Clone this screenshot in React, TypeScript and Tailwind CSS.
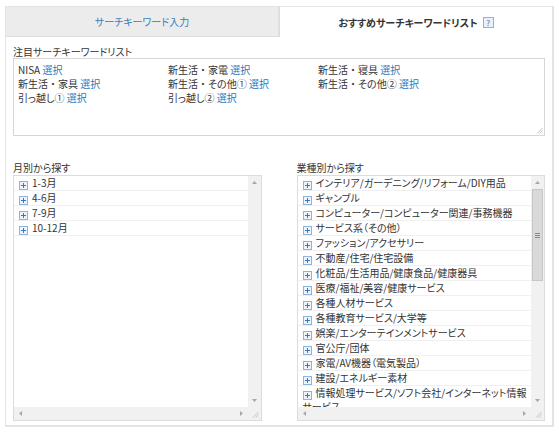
import React from "react";

const keywords = [
  "NISA",
  "新生活・家電",
  "新生活・寝具",
  "新生活・家具",
  "新生活・その他①",
  "新生活・その他②",
  "引っ越し①",
  "引っ越し②",
];

const months = ["1-3月", "4-6月", "7-9月", "10-12月"];

const industries = [
  "インテリア/ガーデニング/リフォーム/DIY用品",
  "ギャンブル",
  "コンピューター/コンピューター関連/事務機器",
  "サービス系（その他）",
  "ファッション/アクセサリー",
  "不動産/住宅/住宅設備",
  "化粧品/生活用品/健康食品/健康器具",
  "医療/福祉/美容/健康サービス",
  "各種人材サービス",
  "各種教育サービス/大学等",
  "娯楽/エンターテインメントサービス",
  "官公庁/団体",
  "家電/AV機器（電気製品）",
  "建設/エネルギー素材",
  "情報処理サービス/ソフト会社/インターネット情報サービス",
];

// keep the middle dot full width (palt would squeeze it)
function Label({ text }: { text: string }) {
  const parts = text.split("・");
  return (
    <>
      {parts.map((p, i) => (
        <React.Fragment key={i}>
          {i > 0 && <span className="[font-feature-settings:normal]">・</span>}
          {p}
        </React.Fragment>
      ))}
    </>
  );
}

function PlusBox() {
  return (
    <span className="inline-flex items-center justify-center w-[9px] h-[9px] border border-[#8fb3d9] bg-[#eef4fb] mr-[4px] align-[-1px]">
      <svg width="5" height="5" viewBox="0 0 5 5">
        <path d="M0 2.5H5M2.5 0V5" stroke="#3a78b8" strokeWidth="1" />
      </svg>
    </span>
  );
}

function Arrow({ dir }: { dir: "up" | "down" | "left" | "right" }) {
  const d = {
    up: "M1 4L3.5 1L6 4Z",
    down: "M1 1L3.5 4L6 1Z",
    left: "M4 1L1 3.5L4 6Z",
    right: "M1 1L4 3.5L1 6Z",
  }[dir];
  const vertical = dir === "up" || dir === "down";
  return (
    <svg width={vertical ? 7 : 5} height={vertical ? 5 : 7} viewBox={vertical ? "0 0 7 5" : "0 0 5 7"}>
      <path d={d} fill="#a8a8a8" />
    </svg>
  );
}

function Grip() {
  return (
    <svg width="7" height="7" viewBox="0 0 7 7">
      <path d="M6.5 1L1 6.5M6.5 3.5L3.5 6.5M6.5 6L6 6.5" stroke="#c4c4c4" strokeWidth="1" />
    </svg>
  );
}

function TreeList({ items, thumb }: { items: string[]; thumb?: boolean }) {
  return (
    <div className="h-[246px] border border-[#dcdcdc] bg-white flex flex-col">
      <div className="flex flex-1 min-h-0">
        <div className="flex-1 overflow-hidden">
          {items.map((item) => (
            <div
              key={item}
              className="pl-[5px] pr-[4px] leading-[14px] border-b border-[#f0f0f0] text-[10px] text-[#333]"
            >
              <PlusBox />
              {item}
            </div>
          ))}
        </div>
        <div className="w-[13px] bg-[#f1f1f1] flex flex-col">
          <div className="h-[13px] flex items-center justify-center">
            <Arrow dir="up" />
          </div>
          <div className="flex-1 px-[1px]">
            {thumb && (
              <div className="h-[92px] bg-[#d9d9d9] border border-[#c6c6c6] flex flex-col items-center justify-center gap-[1px]">
                <div className="w-[5px] h-px bg-[#8a8a8a]" />
                <div className="w-[5px] h-px bg-[#8a8a8a]" />
                <div className="w-[5px] h-px bg-[#8a8a8a]" />
              </div>
            )}
          </div>
          <div className="h-[13px] flex items-center justify-center">
            <Arrow dir="down" />
          </div>
        </div>
      </div>
      <div className="h-[13px] flex bg-[#f1f1f1]">
        <div className="w-[13px] flex items-center justify-center">
          <Arrow dir="left" />
        </div>
        <div className="flex-1" />
        <div className="w-[13px] flex items-center justify-center">
          <Arrow dir="right" />
        </div>
        <div className="w-[13px] flex items-end justify-end p-[2px] bg-[#f1f1f1]">
          <Grip />
        </div>
      </div>
    </div>
  );
}

export default function App() {
  return (
    <div className="w-[559px] h-[435px] bg-white pt-[6px] pl-[5px] font-['Noto_Sans_CJK_JP',sans-serif] [font-feature-settings:'palt'] text-[#333]">
      <div className="w-[549px] h-[421px] border border-r-2 border-b-2 border-[#e4e4e4]">
        {/* Tabs */}
        <div className="flex h-[30px]">
          <div className="w-[274px] bg-[#ececec] border-r-2 border-b border-[#dedede] flex items-center justify-center text-[10px] text-[#3a7cb8]">
            サーチキーワード入力
          </div>
          <div className="flex-1 flex items-center justify-center text-[10px] font-bold text-[#333] gap-[5px]">
            おすすめサーチキーワードリスト
            <span className="w-[11px] h-[11px] border border-[#8fb3d9] bg-[#e8f1fb] text-[#3a78b8] text-[8px] leading-[9px] text-center font-normal">
              ?
            </span>
          </div>
        </div>

        <div className="px-[7px]">
          {/* 注目サーチキーワードリスト */}
          <div className="mt-[8px] text-[10px] leading-[13px]">注目サーチキーワードリスト</div>
          <div className="relative w-[532px] h-[78px] border border-[#d6d6d6] px-[4px] py-[4px]">
            <div className="grid grid-cols-[150px_150px_150px] text-[10px] leading-[14px]">
              {keywords.map((k) => (
                <div key={k}>
                  <Label text={k} /> <span className="text-[#2f76b8]">選択</span>
                </div>
              ))}
            </div>
            <div className="absolute right-[1px] bottom-[1px]">
              <Grip />
            </div>
          </div>

          {/* Lists */}
          <div className="flex gap-[35px] mt-[25px]">
            <div className="w-[249px]">
              <div className="text-[10px] leading-[13px] mb-[1px]">月別から探す</div>
              <TreeList items={months} />
            </div>
            <div className="w-[249px]">
              <div className="text-[10px] leading-[13px] mb-[1px]">業種別から探す</div>
              <TreeList items={industries} thumb />
            </div>
          </div>
        </div>
      </div>
    </div>
  );
}
